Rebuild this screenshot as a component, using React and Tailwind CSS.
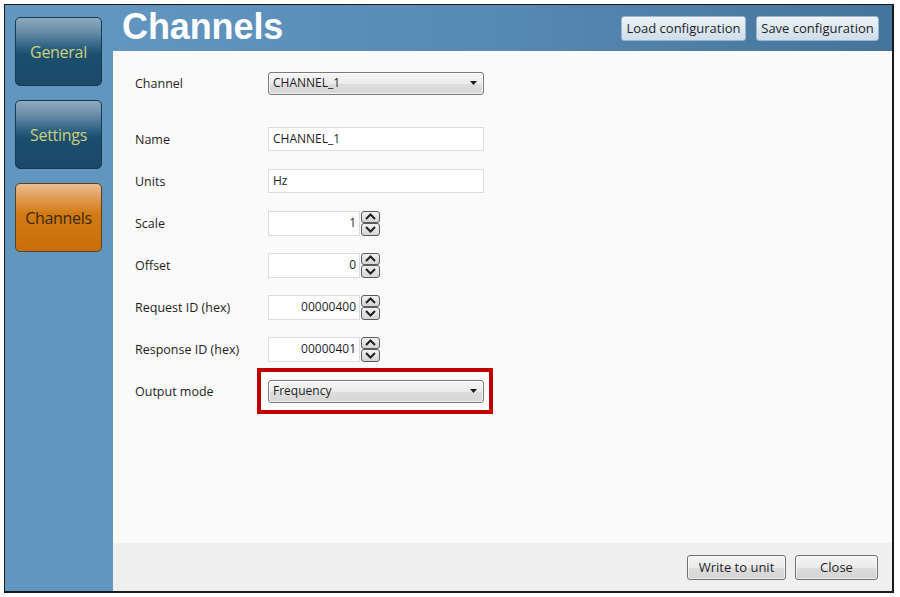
import React from "react";

const font = { fontFamily: '"Open Sans", "Noto Sans", sans-serif' };

function NavButton({ label, active }) {
  return (
    <div
      className={
        "w-[87px] h-[69px] rounded-[5px] border flex items-center justify-center text-[16px] " +
        (active
          ? "border-[#5a4020] bg-[linear-gradient(to_bottom,#ecbc92_0%,#e09a50_22%,#d27a14_45%,#c96e08_100%)] text-[#3a2a0e]"
          : "border-[#163a52] bg-[linear-gradient(to_bottom,#8eaabd_0%,#6a8ea8_20%,#2a5f80_45%,#1b4d6e_55%,#1a4a6a_100%)] text-[#cfd07a]")
      }
    >
      <span className="tracking-[-0.3px]">{label}</span>
    </div>
  );
}

function ComboBox({ value }) {
  return (
    <div className="w-[216px] h-[23px] rounded-[3px] border border-[#7a7a7a] bg-[linear-gradient(to_bottom,#f6f6f6_0%,#ebebeb_50%,#dddddd_51%,#d6d6d6_100%)] flex items-center justify-between pl-[4px] pr-[6px] text-[12px] text-[#1e1e1e] shadow-[inset_0_0_0_1px_rgba(255,255,255,0.7)]">
      <span>{value}</span>
      <svg width="7" height="4" viewBox="0 0 7 4">
        <path d="M0 0 L7 0 L3.5 4 Z" fill="#1a1a1a" />
      </svg>
    </div>
  );
}

function TextBox({ value }) {
  return (
    <div className="w-[216px] h-[24px] border border-[#d8dde3] bg-white flex items-center pl-[4px] text-[12px] text-[#1e1e1e]">
      {value}
    </div>
  );
}

function Spinner() {
  return (
    <div className="flex flex-col w-[19px] h-[25px] ml-[1px]">
      <div className="h-[12px] rounded-[3px] border border-[#5a5a5a] bg-[linear-gradient(to_bottom,#f2f2f2,#d4d4d4)] flex items-center justify-center">
        <svg width="11" height="7" viewBox="0 0 11 7">
          <path d="M1 6 L5.5 1.5 L10 6" stroke="#222" strokeWidth="2" fill="none" />
        </svg>
      </div>
      <div className="h-[13px] rounded-[3px] border border-[#5a5a5a] bg-[linear-gradient(to_bottom,#f2f2f2,#d4d4d4)] flex items-center justify-center">
        <svg width="11" height="7" viewBox="0 0 11 7">
          <path d="M1 1 L5.5 5.5 L10 1" stroke="#222" strokeWidth="2" fill="none" />
        </svg>
      </div>
    </div>
  );
}

function NumBox({ value }) {
  return (
    <div className="flex items-center">
      <div className="w-[92px] h-[25px] border border-[#d8dde3] bg-white flex items-center justify-end pr-[3px] text-[12px] text-[#1e1e1e]">
        {value}
      </div>
      <Spinner />
    </div>
  );
}

function Row({ label, children }) {
  return (
    <div className="flex items-center h-[24px]">
      <div className="w-[133px] text-[12.5px] text-[#1e1e1e] pt-[2px]">{label}</div>
      {children}
    </div>
  );
}

function WinButton({ children, className = "" }) {
  return (
    <div
      className={
        "h-[25px] rounded-[3px] border border-[#707070] bg-[linear-gradient(to_bottom,#f3f3f3_0%,#ebebeb_50%,#dddddd_51%,#d4d4d4_100%)] flex items-center justify-center text-[13px] text-[#1e1e1e] shadow-[inset_0_0_0_1px_rgba(255,255,255,0.6)] " +
        className
      }
    >
      {children}
    </div>
  );
}

function HeaderButton({ children, className = "" }) {
  return (
    <div
      className={
        "h-[25px] rounded-[3px] border border-[#9fb4c6] bg-[linear-gradient(to_bottom,#eef4fa_0%,#dde8f2_50%,#cfdeeb_100%)] flex items-center justify-center text-[13px] text-[#1e1e1e] " +
        className
      }
    >
      {children}
    </div>
  );
}

export default function App() {
  return (
    <div className="w-[900px] h-[597px] bg-white pt-[4px] pl-[4px]" style={font}>
      <div className="w-[890px] h-[589px] border border-[#1a1a1a] border-r-2 border-b-2 flex bg-[#6196be]">
        {/* Sidebar */}
        <div className="w-[108px] shrink-0 flex flex-col gap-[14px] pt-[12px] pl-[10px]">
          <NavButton label="General" />
          <NavButton label="Settings" />
          <NavButton label="Channels" active />
        </div>
        {/* Main */}
        <div className="flex-1 flex flex-col">
          <div className="h-[46px] shrink-0 flex items-center justify-between pl-[9px] pr-[13px] bg-[linear-gradient(to_right,#6096c0_0%,#5689b3_50%,#44749b_100%)]">
            <div
              className="text-[36px] font-bold text-white leading-none mt-[-2px] tracking-[-0.1px]"
              style={{ fontFamily: '"Liberation Sans", Arial, sans-serif' }}
            >
              Channels
            </div>
            <div className="flex gap-[10px] mt-[1px]">
              <HeaderButton className="w-[125px]">Load configuration</HeaderButton>
              <HeaderButton className="w-[123px]">Save configuration</HeaderButton>
            </div>
          </div>
          <div className="flex-1 bg-[#fafafa] pl-[22px] pt-[20px]">
            <Row label="Channel">
              <ComboBox value="CHANNEL_1" />
            </Row>
            <div className="flex flex-col gap-[18px] mt-[32px]">
              <Row label="Name">
                <TextBox value="CHANNEL_1" />
              </Row>
              <Row label="Units">
                <TextBox value="Hz" />
              </Row>
              <Row label="Scale">
                <NumBox value="1" />
              </Row>
              <Row label="Offset">
                <NumBox value="0" />
              </Row>
              <Row label="Request ID (hex)">
                <NumBox value="00000400" />
              </Row>
              <Row label="Response ID (hex)">
                <NumBox value="00000401" />
              </Row>
              <Row label="Output mode">
                <div className="relative">
                  <ComboBox value="Frequency" />
                  <div className="absolute left-[-11px] top-[-12px] w-[236px] h-[46px] border-[4px] border-[#c00000] pointer-events-none" />
                </div>
              </Row>
            </div>
          </div>
          <div className="h-[48px] shrink-0 bg-[#efefef] flex items-start justify-end gap-[9px] pt-[12px] pr-[14px]">
            <WinButton className="w-[99px]">Write to unit</WinButton>
            <WinButton className="w-[83px]">Close</WinButton>
          </div>
        </div>
      </div>
    </div>
  );
}
